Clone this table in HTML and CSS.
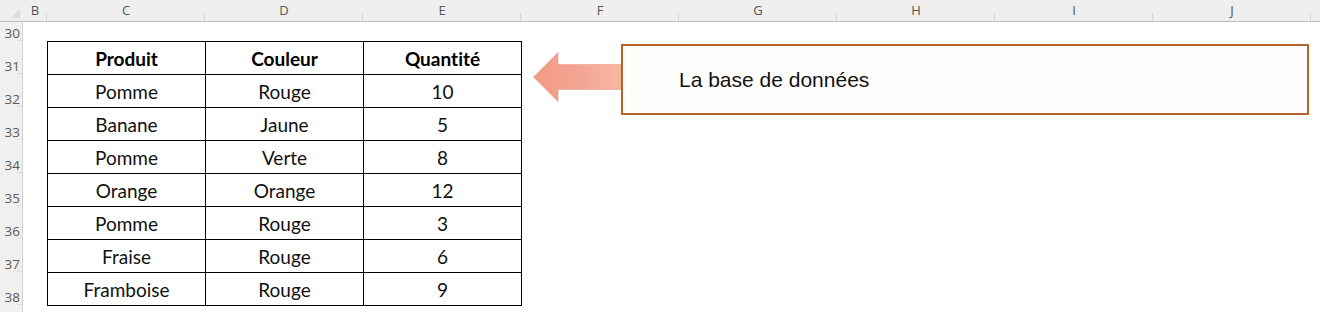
FILE: index.html
```html
<!DOCTYPE html>
<html lang="fr">
<head>
<meta charset="utf-8">
<title>La base de données</title>
<link rel="stylesheet" href="styles.css">
</head>
<body>
<div class="sheet">
  <div class="colhead">
    <div class="corner"><svg class="tri" width="9" height="9" viewBox="0 0 9 9"><polygon points="9,0 9,9 0,9" fill="#dcdcdc"/></svg></div>
    <div class="col">B</div>
    <div class="col">C</div>
    <div class="col">D</div>
    <div class="col">E</div>
    <div class="col">F</div>
    <div class="col">G</div>
    <div class="col">H</div>
    <div class="col">I</div>
    <div class="col">J</div>
    <div class="col rest"></div>
  </div>
  <div class="body">
    <div class="rowhead">
      <div class="rn first">30</div>
      <div class="rn">31</div>
      <div class="rn">32</div>
      <div class="rn">33</div>
      <div class="rn">34</div>
      <div class="rn">35</div>
      <div class="rn">36</div>
      <div class="rn">37</div>
      <div class="rn">38</div>
      <div class="rn"></div>
    </div>
    <div class="cells">
      <div class="data">
        <div class="th">Produit</div><div class="th">Couleur</div><div class="th">Quantité</div>
        <div class="td">Pomme</div><div class="td">Rouge</div><div class="td">10</div>
        <div class="td">Banane</div><div class="td">Jaune</div><div class="td">5</div>
        <div class="td">Pomme</div><div class="td">Verte</div><div class="td">8</div>
        <div class="td">Orange</div><div class="td">Orange</div><div class="td">12</div>
        <div class="td">Pomme</div><div class="td">Rouge</div><div class="td">3</div>
        <div class="td">Fraise</div><div class="td">Rouge</div><div class="td">6</div>
        <div class="td">Framboise</div><div class="td">Rouge</div><div class="td">9</div>
      </div>
      <div class="callout">
        <svg class="arrow" width="88" height="50" viewBox="0 0 88 50">
          <defs>
            <linearGradient id="ag" x1="0" y1="0" x2="1" y2="0">
              <stop offset="0" stop-color="#f19b84"/>
              <stop offset="0.55" stop-color="#f4a596"/>
              <stop offset="1" stop-color="#f6b89e"/>
            </linearGradient>
          </defs>
          <polygon points="0.5,25 25,0.5 25,12.5 88,12.5 88,37.5 25,37.5 25,49.5" fill="url(#ag)" stroke="#ec9a86" stroke-width="0.6"/>
        </svg>
        <div class="box">La base de données</div>
      </div>
    </div>
  </div>
</div>
</body>
</html>
```

FILE: styles.css
```css
html, body {
  margin: 0;
  padding: 0;
  background: #ffffff;
}

.sheet {
  width: 1320px;
  height: 312px;
  overflow: hidden;
  display: flex;
  flex-direction: column;
}

.colhead {
  display: grid;
  grid-template-columns: 23px 24px repeat(8, 158px) 1fr;
  height: 21px;
  background: #efefef;
  border-bottom: 1px solid #bdbdbd;
  font-family: "Open Sans", "Noto Sans", sans-serif;
  font-size: 13px;
  color: #555555;
}

.corner {
  display: flex;
  align-items: flex-end;
  justify-content: flex-end;
  padding: 0 3px 3px 0;
}

.col {
  display: flex;
  align-items: center;
  justify-content: center;
  line-height: 21px;
  background: linear-gradient(#d4d4d4, #d4d4d4) right bottom / 1px 7px no-repeat;
}

.col.rest {
  background: none;
}

.body {
  display: flex;
  flex: 1;
}

.rowhead {
  width: 22px;
  border-right: 1px solid #d4d4d4;
  background: #f0f0f0;
  display: flex;
  flex-direction: column;
  font-family: "Open Sans", "Noto Sans", sans-serif;
  font-size: 13.5px;
  color: #5a5a5a;
}

.rn {
  height: 33px;
  flex: none;
  display: flex;
  align-items: flex-end;
  justify-content: flex-end;
  padding-right: 2px;
  line-height: 15px;
  box-sizing: border-box;
  background: linear-gradient(#dcdcdc, #dcdcdc) right bottom / 5px 1px no-repeat;
}

.rn.first {
  height: 19px;
}

.cells {
  flex: 1;
  display: flex;
  align-items: flex-start;
  padding-top: 19px;
}

.data {
  margin-left: 24px;
  display: grid;
  grid-template-columns: repeat(3, 157px);
  grid-auto-rows: 32px;
  gap: 1px;
  background: #000;
  border: 1px solid #000;
  font-family: Lato, "Open Sans", sans-serif;
  font-size: 19px;
  font-variant-ligatures: none;
  color: #111;
}

.th, .td {
  background: #fff;
  display: flex;
  align-items: center;
  justify-content: center;
}

.th {
  font-weight: bold;
  color: #000;
}

.td {
  padding-top: 1px;
}

.callout {
  display: flex;
  align-items: flex-start;
  margin-left: 11px;
  margin-top: 3px;
}

.arrow {
  display: block;
  margin-top: 8px;
  flex: none;
}

.box {
  width: 688px;
  height: 71px;
  box-sizing: border-box;
  border: 2px solid #b5652c;
  background: #fffefd;
  display: flex;
  align-items: center;
  padding-left: 56px;
  font-family: "Liberation Sans", Arial, sans-serif;
  font-size: 21px;
  color: #111;
}
```
